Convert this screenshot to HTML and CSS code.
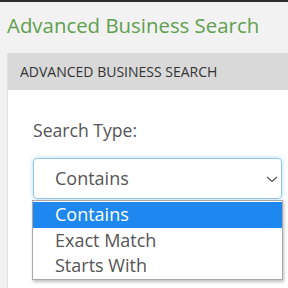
FILE: index.html
```html
<!DOCTYPE html>
<html>
<head>
<meta charset="utf-8">
<link rel="stylesheet" href="styles.css">
</head>
<body>
<div class="topbar"></div>
<h1 class="title">Advanced Business Search</h1>
<section class="panel">
  <div class="panel-head">ADVANCED BUSINESS SEARCH</div>
  <div class="panel-body">
    <label class="label">Search Type:</label>
    <div class="select-wrap">
      <div class="select">
        <span>Contains</span>
        <svg class="chev" width="12" height="7" viewBox="0 0 12 7"><path d="M1 1 L6 5.5 L11 1" fill="none" stroke="#555" stroke-width="1.3"/></svg>
      </div>
      <ul class="menu">
        <li class="opt active">Contains</li>
        <li class="opt">Exact Match</li>
        <li class="opt">Starts With</li>
      </ul>
    </div>
    <div class="field"></div>
  </div>
</section>
</body>
</html>
```
FILE: styles.css
```css
html, body {
  margin: 0;
  padding: 0;
  background: #f2f2f2;
  font-family: "Open Sans", "Liberation Sans", sans-serif;
  overflow: hidden;
  height: 288px;
}
.topbar {
  height: 2px;
  background: #2e2e2e;
}
.title {
  margin: 10px 0 14px 7px;
  font-size: 20.4px;
  line-height: 27px;
  font-weight: 400;
  color: #5f9f4f;
}
.panel {
  margin-left: 7px;
  border-left: 1px solid #e2e2e2;
  background: #fff;
}
.panel-head {
  height: 37px;
  line-height: 37px;
  padding-left: 12px;
  background: #d9d9d9;
  border-bottom: 0;
  font-size: 14px;
  color: #333;
}
.panel-body {
  padding: 28px 6px 40px 25px;
}
.label {
  display: block;
  font-size: 17.6px;
  line-height: 25px;
  color: #555;
}
.select-wrap {
  position: relative;
  margin-top: 15px;
}
.select {
  height: 39px;
  border: 1px solid #93c7e8;
  border-radius: 4px;
  box-shadow: 0 0 4px rgba(102, 175, 233, 0.55);
  display: flex;
  align-items: center;
  justify-content: space-between;
  padding: 0 3px 0 21px;
  font-size: 18px;
  line-height: 39px;
  color: #555;
}
.chev {
  display: block;
  margin-top: 1px;
}
.menu {
  position: absolute;
  top: 42px;
  left: -1px;
  right: -1px;
  margin: 0;
  padding: 1px 0 0;
  list-style: none;
  background: #fff;
  border: 1px solid #a8a8a8;
  box-shadow: 1px 2px 3px rgba(0, 0, 0, 0.25);
  z-index: 2;
}
.opt {
  height: 25.5px;
  line-height: 25.5px;
  padding-left: 22px;
  font-size: 18px;
  color: #555;
}
.opt.active {
  background: #1e87f0;
  color: #fff;
}
.field {
  margin-top: 20px;
  height: 40px;
  border: 1px solid #d6d6d6;
  border-radius: 4px;
}
```
